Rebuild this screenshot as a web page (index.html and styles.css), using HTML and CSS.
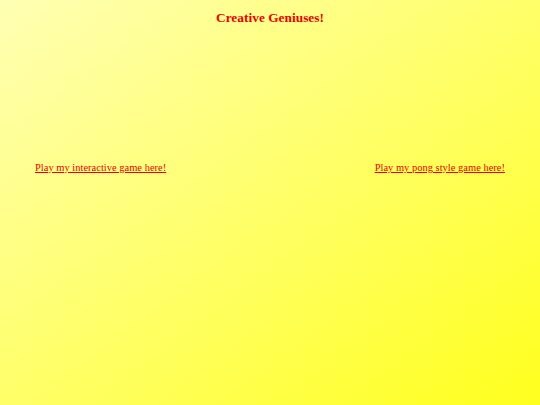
FILE: index.html
```html
<!DOCTYPE html>
<html>
<head>
<meta charset="utf-8">
<link rel="stylesheet" href="styles.css">
</head>
<body>
<div class="page">
  <h2 class="title">Creative Geniuses!</h2>
  <div class="links">
    <a class="game-link" href="#">Play my interactive game here!</a>
    <a class="game-link" href="#">Play my pong style game here!</a>
  </div>
</div>
</body>
</html>
```
FILE: styles.css
```css
html, body {
  margin: 0;
  padding: 0;
}
body {
  width: 540px;
  height: 405px;
  background: linear-gradient(to bottom right, #ffffb4, #ffff1e);
  font-family: "Liberation Serif", "Times New Roman", serif;
  overflow: hidden;
}
.page {
  display: flex;
  flex-direction: column;
}
.title {
  margin: 9px 0 0;
  text-align: center;
  color: #ee0000;
  font-size: 13.4px;
  font-weight: bold;
  line-height: 18px;
}
.links {
  display: flex;
  justify-content: space-between;
  padding: 0 35px;
  margin-top: 133px;
}
.game-link {
  color: #ee0000;
  font-size: 10.5px;
  line-height: 15px;
  text-decoration: underline;
}
```
